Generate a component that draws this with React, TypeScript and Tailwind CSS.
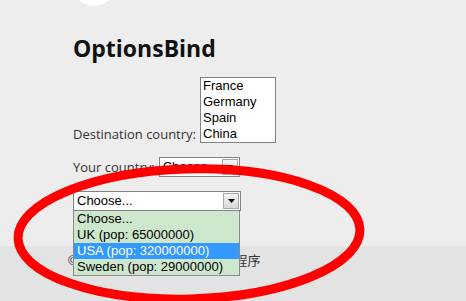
import React from 'react';

const countries = ['France', 'Germany', 'Spain', 'China'];

const options = [
  { label: 'Choose...', active: false },
  { label: 'UK (pop: 65000000)', active: false },
  { label: 'USA (pop: 320000000)', active: true },
  { label: 'Sweden (pop: 29000000)', active: false },
];

const Arrow = () => (
  <span className="m-[1px] flex w-[16px] items-center justify-center border border-[#a7a7a7] bg-gradient-to-b from-[#f4f4f4] to-[#d9d9d9]">
    <svg width="7" height="4" viewBox="0 0 7 4">
      <path d="M0 0h7L3.5 4z" fill="#000" />
    </svg>
  </span>
);

const SelectBox = ({ width, text }: { width: string; text: string }) => (
  <div className={`flex h-[20px] ${width} border border-[#828282] bg-white`}>
    <span className="flex-1 overflow-hidden whitespace-nowrap pl-[3px] font-['Liberation_Sans',Arial,sans-serif] text-[13px] leading-[18px] text-black">
      {text}
    </span>
    <Arrow />
  </div>
);

export default function App() {
  return (
    <div className="relative flex h-[301px] w-[466px] flex-col overflow-hidden bg-[#ededed] font-['Open_Sans',sans-serif]">
      <main className="flex-1 pl-[73px]">
        <div className="-mt-[38px] ml-[-1px] h-[44px] w-[44px] rounded-full bg-white" />
        <h1 className="mt-[26px] text-[23px] font-bold leading-[32px] text-[#111]">OptionsBind</h1>

        <div className="mt-[13px] flex items-end gap-[4px]">
          <label className="mb-[1px] text-[13px] leading-[16px] text-[#333]">Destination country:</label>
          <div className="w-[76px] border border-[#828282] bg-white pl-[2px] font-['Liberation_Sans',Arial,sans-serif] text-[13px] leading-[16px] text-black">
            {countries.map((c) => (
              <div key={c}>{c}</div>
            ))}
          </div>
        </div>

        <div className="mt-[14px] flex items-center gap-[4px]">
          <label className="text-[13px] leading-[16px] text-[#333]">Your country:</label>
          <SelectBox width="w-[81px]" text="Choose..." />
        </div>

        <div className="relative mt-[14px] w-[168px]">
          <SelectBox width="w-[168px]" text="Choose..." />
          <div className="absolute left-0 top-full z-10 w-[167px] border border-t-0 border-[#8a8a8a] bg-[#cde7cd] font-['Liberation_Sans',Arial,sans-serif] text-[13px] leading-[16px]">
            {options.map((o) => (
              <div
                key={o.label}
                className={`whitespace-nowrap pl-[3px] ${o.active ? 'bg-[#3399ff] text-white' : 'text-black'}`}
              >
                {o.label}
              </div>
            ))}
          </div>
        </div>
      </main>

      <footer className="h-[55px] bg-[#e3e3e3] pl-[68px] pt-[5px] font-['Liberation_Sans','Noto_Sans_CJK_SC',sans-serif] text-[13px] leading-[20px] text-[#333]">
        © 2015 - 我的 ASP.NET 应用程序
      </footer>

      <svg className="pointer-events-none absolute inset-0 z-20" width="466" height="301" viewBox="0 0 466 301">
        <ellipse cx="189" cy="234" rx="171" ry="65" fill="none" stroke="#ff0000" strokeWidth="9" transform="rotate(-1.5 189 234)" />
      </svg>
    </div>
  );
}
